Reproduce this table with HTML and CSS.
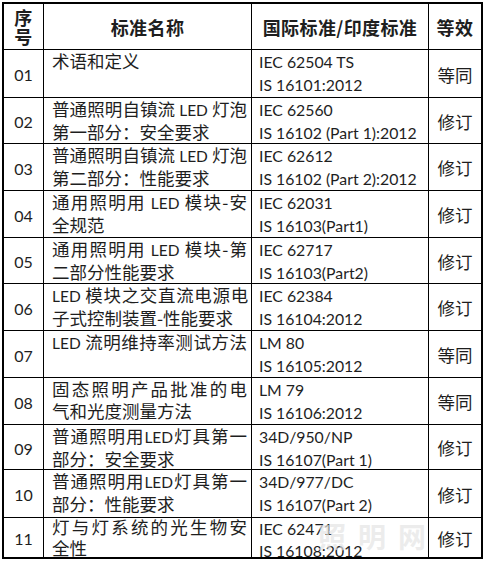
FILE: index.html
```html
<!DOCTYPE html>
<html lang="zh-CN">
<head>
<meta charset="utf-8">
<title>标准对照表</title>
<link rel="stylesheet" href="styles.css">
</head>
<body>
<div class="sheet">
  <div class="grid">
    <div class="cell head num"><span>序</span><span>号</span></div>
    <div class="cell head mid">标准名称</div>
    <div class="cell head mid">国际标准/印度标准</div>
    <div class="cell head mid last">等效</div>

    <div class="cell num">01</div>
    <div class="cell name"><div class="ln">术语和定义</div></div>
    <div class="cell std"><div>IEC 62504 TS</div><div>IS 16101:2012</div></div>
    <div class="cell eq last">等同</div>

    <div class="cell num">02</div>
    <div class="cell name"><div class="ln fill">普通照明自镇流 <span class="lat">LED</span> 灯泡</div><div class="ln">第一部分：安全要求</div></div>
    <div class="cell std"><div>IEC 62560</div><div>IS 16102 (Part 1):2012</div></div>
    <div class="cell eq last">修订</div>

    <div class="cell num">03</div>
    <div class="cell name"><div class="ln fill">普通照明自镇流 <span class="lat">LED</span> 灯泡</div><div class="ln">第二部分：性能要求</div></div>
    <div class="cell std"><div>IEC 62612</div><div>IS 16102 (Part 2):2012</div></div>
    <div class="cell eq last">修订</div>

    <div class="cell num">04</div>
    <div class="cell name"><div class="ln fill">通用照明用 <span class="lat">LED</span> 模块-安</div><div class="ln">全规范</div></div>
    <div class="cell std"><div>IEC 62031</div><div>IS 16103(Part1)</div></div>
    <div class="cell eq last">修订</div>

    <div class="cell num">05</div>
    <div class="cell name"><div class="ln fill">通用照明用 <span class="lat">LED</span> 模块-第</div><div class="ln">二部分性能要求</div></div>
    <div class="cell std"><div>IEC 62717</div><div>IS 16103(Part2)</div></div>
    <div class="cell eq last">修订</div>

    <div class="cell num">06</div>
    <div class="cell name"><div class="ln fill tight"><span class="lat">LED</span> 模块之交直流电源电</div><div class="ln">子式控制装置-性能要求</div></div>
    <div class="cell std"><div>IEC 62384</div><div>IS 16104:2012</div></div>
    <div class="cell eq last">修订</div>

    <div class="cell num">07</div>
    <div class="cell name"><div class="ln fill"><span class="lat">LED</span> 流明维持率测试方法</div></div>
    <div class="cell std"><div>LM 80</div><div>IS 16105:2012</div></div>
    <div class="cell eq last">等同</div>

    <div class="cell num">08</div>
    <div class="cell name"><div class="ln fill">固态照明产品批准的电</div><div class="ln">气和光度测量方法</div></div>
    <div class="cell std"><div>LM 79</div><div>IS 16106:2012</div></div>
    <div class="cell eq last">等同</div>

    <div class="cell num">09</div>
    <div class="cell name"><div class="ln fill">普通照明用<span class="lat">LED</span>灯具第一</div><div class="ln">部分：安全要求</div></div>
    <div class="cell std"><div>34D/950/NP</div><div>IS 16107(Part 1)</div></div>
    <div class="cell eq last">修订</div>

    <div class="cell num">10</div>
    <div class="cell name"><div class="ln fill">普通照明用<span class="lat">LED</span>灯具第一</div><div class="ln">部分：性能要求</div></div>
    <div class="cell std"><div>34D/977/DC</div><div>IS 16107(Part 2)</div></div>
    <div class="cell eq last">修订</div>

    <div class="cell num bottom">11</div>
    <div class="cell name bottom"><div class="ln fill">灯与灯系统的光生物安</div><div class="ln">全性</div></div>
    <div class="cell std bottom"><div>IEC 62471</div><div>IS 16108:2012</div></div>
    <div class="cell eq last bottom">修订</div>
  </div>
  <div class="watermark">照明网</div>
</div>
</body>
</html>
```

FILE: styles.css
```css
html, body {
  margin: 0;
  padding: 0;
  background: #ffffff;
}

body {
  padding: 2px;
  font-family: "Noto Sans CJK SC", sans-serif;
  color: #1e1e1e;
}

.sheet {
  position: relative;
  width: 481px;
}

.grid {
  display: grid;
  grid-template-columns: 40px 208px 177px 52px;
  grid-template-rows: 46px 48px 46px 47px 47px 46px 47px 47px 47px 45px 48px 39px;
  border: 2px solid #000;
  width: 477px;
}

.cell {
  box-sizing: border-box;
  border-right: 1px solid #000;
  border-bottom: 1px solid #000;
  min-width: 0;
}

.cell.last {
  border-right: none;
}

.cell.bottom {
  border-bottom: none;
}

.head {
  font-weight: 700;
  font-size: 18px;
  letter-spacing: 0.4px;
  display: flex;
  align-items: center;
  justify-content: center;
}

.head.num {
  flex-direction: column;
  line-height: 19px;
  padding-top: 0;
  font-family: "Noto Sans CJK SC", sans-serif;
  font-size: 18px;
}

.num {
  display: flex;
  align-items: center;
  justify-content: center;
  font-family: Lato, "Noto Sans CJK SC", sans-serif;
  font-size: 16px;
  padding-top: 2px;
}

.name {
  padding: 0 4px 0 8px;
  font-size: 17.5px;
  line-height: 22px;
}

.name.bottom {
  line-height: 21px;
}

.name.bottom .ln:first-child {
  margin-top: -2px;
}

.ln {
  white-space: nowrap;
}

.ln.fill {
  text-align: justify;
  text-align-last: justify;
  white-space: normal;
}

.ln.tight {
  letter-spacing: -1.2px;
}

.lat {
  font-family: Lato, sans-serif;
  font-size: 15.5px;
  letter-spacing: 0;
}

.std {
  padding: 0 2px 0 7px;
  font-family: Lato, "Noto Sans CJK SC", sans-serif;
  font-size: 15.8px;
  line-height: 23px;
  white-space: nowrap;
}

.std.bottom {
  line-height: 22px;
}

.eq {
  display: flex;
  align-items: center;
  justify-content: center;
  font-size: 17.5px;
  padding-top: 1px;
}

.watermark {
  position: absolute;
  left: 316px;
  top: 514px;
  font-size: 28px;
  line-height: 40px;
  font-weight: 700;
  letter-spacing: 12px;
  color: rgba(228, 228, 228, 0.7);
  pointer-events: none;
}
```
